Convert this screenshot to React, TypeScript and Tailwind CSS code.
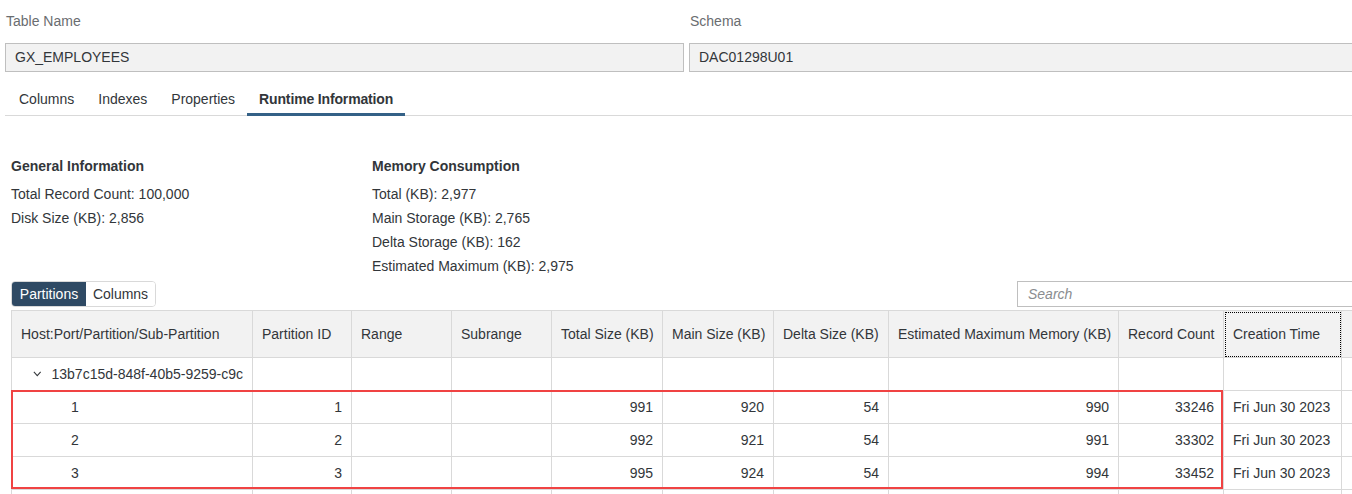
import React from "react";

const cols = [241, 99, 100, 100, 111, 111, 115, 230, 105, 118, 120];

const headers = [
  "Host:Port/Partition/Sub-Partition",
  "Partition ID",
  "Range",
  "Subrange",
  "Total Size (KB)",
  "Main Size (KB)",
  "Delta Size (KB)",
  "Estimated Maximum Memory (KB)",
  "Record Count",
  "Creation Time",
  "",
];

const rows = [
  { part: "1", id: "1", total: "991", main: "920", delta: "54", est: "990", count: "33246", time: "Fri Jun 30 2023" },
  { part: "2", id: "2", total: "992", main: "921", delta: "54", est: "991", count: "33302", time: "Fri Jun 30 2023" },
  { part: "3", id: "3", total: "995", main: "924", delta: "54", est: "994", count: "33452", time: "Fri Jun 30 2023" },
];

function Chevron() {
  return (
    <svg viewBox="0 0 10 6" className="w-[10px] h-[6px]" fill="none" stroke="#32363a" strokeWidth="1.2">
      <path d="M1 0.5l4 4.5 4-4.5" />
    </svg>
  );
}

function Field({ label, value, wide }: { label: string; value: string; wide?: boolean }) {
  return (
    <div className={wide ? "w-[700px] shrink-0" : "w-[679px] shrink-0"}>
      <div className="pt-[11px] pl-[1px] h-[31px] leading-[20px] text-[14px] text-[#6a6d70]">{label}</div>
      <div className="mt-[12px] h-[29px] flex items-center px-[9px] bg-[#f2f2f2] border border-[#bfbfbf] text-[14px] text-[#32363a]">
        {value}
      </div>
    </div>
  );
}

export default function App() {
  const td = "border border-[#d9d9d9] h-[33px] px-[9px] text-[14px] text-[#32363a] whitespace-nowrap overflow-hidden";
  return (
    <div
      className="w-[1352px] h-[494px] overflow-hidden bg-white text-[#32363a]"
      style={{ fontFamily: '"Liberation Sans", Arial, sans-serif' }}
    >
      {/* top fields */}
      <div className="flex gap-[5px] pl-[5px]">
        <Field label="Table Name" value="GX_EMPLOYEES" />
        <Field label="Schema" value="DAC01298U01" wide />
      </div>

      {/* tabs */}
      <div className="mt-[10px] ml-[5px] flex h-[34px] border-b border-[#d9d9d9] pl-[2px]">
        {["Columns", "Indexes", "Properties", "Runtime Information"].map((t) => {
          const active = t === "Runtime Information";
          return (
            <div
              key={t}
              className={`h-[34px] px-[12px] pt-[3px] flex items-center text-[14px] border-b-[3px] ${
                active ? "border-[#346187] font-bold text-[#32363a] tracking-[-0.15px]" : "border-transparent text-[#32363a]"
              }`}
            >
              {t}
            </div>
          );
        })}
      </div>

      {/* info blocks */}
      <div className="mt-[40px] pl-[11px] grid grid-cols-[361px_1fr] text-[14px]">
        <div>
          <div className="font-bold leading-[20px]">General Information</div>
          <div className="mt-[6px] leading-[24px]">
            <div>Total Record Count: 100,000</div>
            <div>Disk Size (KB): 2,856</div>
          </div>
        </div>
        <div>
          <div className="font-bold leading-[20px]">Memory Consumption</div>
          <div className="mt-[6px] leading-[24px]">
            <div>Total (KB): 2,977</div>
            <div>Main Storage (KB): 2,765</div>
            <div>Delta Storage (KB): 162</div>
            <div>Estimated Maximum (KB): 2,975</div>
          </div>
        </div>
      </div>

      {/* toolbar */}
      <div className="mt-[3px] pl-[11px] flex items-center justify-between">
        <div className="flex h-[26px] text-[14px] rounded-[4px] border border-[#d9d9d9] overflow-hidden">
          <div className="w-[74px] bg-[#2f4a64] text-white flex items-center justify-center">Partitions</div>
          <div className="w-[69px] bg-white text-[#32363a] flex items-center justify-center">Columns</div>
        </div>
        <div className="w-[340px] -mr-[5px] h-[26px] border border-[#bfbfbf] flex items-center px-[10px] text-[14px] italic text-[#8a8d90]">
          Search
        </div>
      </div>

      {/* table */}
      <div className="mt-[3px] ml-[11px] relative">
        <table className="table-fixed border-collapse" style={{ width: cols.reduce((a, b) => a + b, 0) }}>
          <colgroup>
            {cols.map((w, i) => (
              <col key={i} style={{ width: w }} />
            ))}
          </colgroup>
          <thead>
            <tr>
              {headers.map((h, i) => (
                <th
                  key={i}
                  className={`border border-[#d9d9d9] bg-[#f2f2f2] h-[47px] px-[9px] text-left font-normal text-[14px] text-[#32363a] whitespace-nowrap ${
                    h === "Creation Time" ? "outline-dotted outline-1 outline-black outline-offset-[-2px]" : ""
                  }`}
                >
                  {h}
                </th>
              ))}
            </tr>
          </thead>
          <tbody>
            <tr>
              <td className={td}>
                <div className="flex items-center gap-[10px] pl-[12px]">
                  <Chevron />
                  <span>13b7c15d-848f-40b5-9259-c9c</span>
                </div>
              </td>
              {cols.slice(1).map((_, i) => (
                <td key={i} className={td} />
              ))}
            </tr>
            {rows.map((r) => (
              <tr key={r.part}>
                <td className={`${td} pl-[59px]`}>{r.part}</td>
                <td className={`${td} text-right`}>{r.id}</td>
                <td className={td} />
                <td className={td} />
                <td className={`${td} text-right`}>{r.total}</td>
                <td className={`${td} text-right`}>{r.main}</td>
                <td className={`${td} text-right`}>{r.delta}</td>
                <td className={`${td} text-right`}>{r.est}</td>
                <td className={`${td} text-right`}>{r.count}</td>
                <td className={td}>{r.time}</td>
                <td className={td} />
              </tr>
            ))}
            <tr>
              {cols.map((_, i) => (
                <td key={i} className={td} />
              ))}
            </tr>
          </tbody>
        </table>
        <div className="absolute left-0 top-[80px] w-[1212px] h-[99px] border-2 border-[#f04343] pointer-events-none" />
      </div>
    </div>
  );
}
